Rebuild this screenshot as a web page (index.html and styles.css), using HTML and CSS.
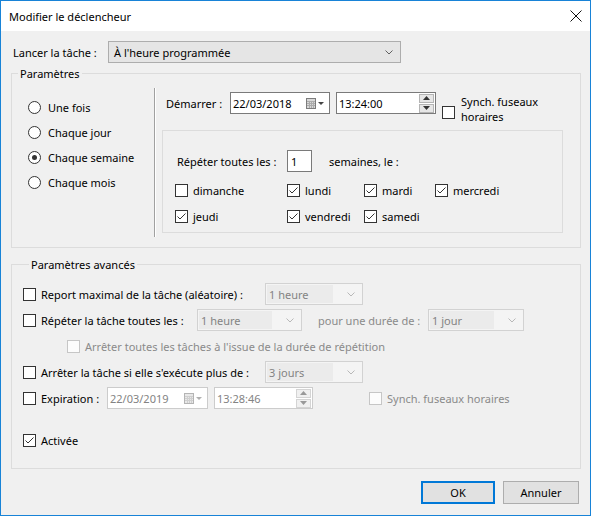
FILE: index.html
```html
<!DOCTYPE html>
<html lang="fr">
<head>
<meta charset="utf-8">
<title>Modifier le déclencheur</title>
<link rel="stylesheet" href="styles.css">
</head>
<body>
<div class="window">
  <div class="titlebar">
    <span class="title">Modifier le déclencheur</span>
    <svg class="close" width="12" height="12" viewBox="0 0 12 12"><path d="M0.5 0.5L11.5 11.5M11.5 0.5L0.5 11.5" stroke="#111" stroke-width="1" fill="none"/></svg>
  </div>
  <div class="content">
    <div class="launch">
      <span class="launch-label">Lancer la tâche :</span>
      <div class="combo combo-main">
        <span class="combo-value">À l'heure programmée</span>
        <svg class="chev" width="8" height="5" viewBox="0 0 8 5"><path d="M0.5 0.5L4 4L7.5 0.5" stroke="#606060" fill="none"/></svg>
      </div>
    </div>

    <fieldset class="group group-params">
      <legend>Paramètres</legend>
      <div class="params-body">
        <div class="radios">
          <div class="radio-row"><span class="radio"></span><span>Une fois</span></div>
          <div class="radio-row"><span class="radio"></span><span>Chaque jour</span></div>
          <div class="radio-row"><span class="radio radio-on"></span><span>Chaque semaine</span></div>
          <div class="radio-row"><span class="radio"></span><span>Chaque mois</span></div>
        </div>
        <div class="vsep"></div>
        <div class="schedule">
          <div class="start-row">
            <span class="start-label">Démarrer :</span>
            <div class="field date">
              <span class="field-text">22/03/2018</span>
              <svg class="cal" width="19" height="11" viewBox="0 0 19 11"><rect x="0.5" y="0.5" width="9" height="10" fill="#d8d8d8" stroke="#7c7c7c"/><path d="M1 3.5H9M1 5.5H9M1 7.5H9M3.5 3V10M5.5 3V10M7.5 3V10" stroke="#ababab" fill="none"/><path d="M12 4H18L15 7Z" fill="#444"/></svg>
            </div>
            <div class="field time">
              <span class="field-text">13:24:00</span>
              <div class="spin">
                <span class="spin-btn"><svg width="7" height="4" viewBox="0 0 7 4"><path d="M0 4H7L3.5 0Z" fill="#333"/></svg></span>
                <span class="spin-btn"><svg width="7" height="4" viewBox="0 0 7 4"><path d="M0 0H7L3.5 4Z" fill="#333"/></svg></span>
              </div>
            </div>
            <div class="synch">
              <span class="cb synch-cb"></span>
              <span class="synch-text">Synch. fuseaux<br>horaires</span>
            </div>
          </div>
          <div class="subframe">
            <div class="repeat-row">
              <span class="repeat-label">Répéter toutes les :</span>
              <div class="field num"><span class="field-text">1</span></div>
              <span class="weeks">semaines, le :</span>
            </div>
            <div class="days">
              <div class="day"><span class="cb"></span><span>dimanche</span></div>
              <div class="day"><span class="cb"><svg width="11" height="11" viewBox="0 0 11 11"><path d="M1.5 5.5L4 8L9.5 2.5" stroke="#333" fill="none"/></svg></span><span>lundi</span></div>
              <div class="day"><span class="cb"><svg width="11" height="11" viewBox="0 0 11 11"><path d="M1.5 5.5L4 8L9.5 2.5" stroke="#333" fill="none"/></svg></span><span>mardi</span></div>
              <div class="day"><span class="cb"><svg width="11" height="11" viewBox="0 0 11 11"><path d="M1.5 5.5L4 8L9.5 2.5" stroke="#333" fill="none"/></svg></span><span>mercredi</span></div>
              <div class="day"><span class="cb"><svg width="11" height="11" viewBox="0 0 11 11"><path d="M1.5 5.5L4 8L9.5 2.5" stroke="#333" fill="none"/></svg></span><span>jeudi</span></div>
              <div class="day"><span class="cb"><svg width="11" height="11" viewBox="0 0 11 11"><path d="M1.5 5.5L4 8L9.5 2.5" stroke="#333" fill="none"/></svg></span><span>vendredi</span></div>
              <div class="day"><span class="cb"><svg width="11" height="11" viewBox="0 0 11 11"><path d="M1.5 5.5L4 8L9.5 2.5" stroke="#333" fill="none"/></svg></span><span>samedi</span></div>
            </div>
          </div>
        </div>
      </div>
    </fieldset>

    <fieldset class="group group-adv">
      <legend>Paramètres avancés</legend>
      <div class="arow">
        <span class="cb"></span>
        <span class="alabel w-long">Report maximal de la tâche (aléatoire) :</span>
        <div class="combo combo-off w98"><span class="combo-value">1 heure</span><svg class="chev" width="8" height="5" viewBox="0 0 8 5"><path d="M0.5 0.5L4 4L7.5 0.5" stroke="#b8b8b8" fill="none"/></svg></div>
      </div>
      <div class="arow">
        <span class="cb"></span>
        <span class="alabel w-rep">Répéter la tâche toutes les :</span>
        <div class="combo combo-off w105"><span class="combo-value">1 heure</span><svg class="chev" width="8" height="5" viewBox="0 0 8 5"><path d="M0.5 0.5L4 4L7.5 0.5" stroke="#b8b8b8" fill="none"/></svg></div>
        <span class="duration off">pour une durée de :</span>
        <div class="combo combo-off w96"><span class="combo-value">1 jour</span><svg class="chev" width="8" height="5" viewBox="0 0 8 5"><path d="M0.5 0.5L4 4L7.5 0.5" stroke="#b8b8b8" fill="none"/></svg></div>
      </div>
      <div class="arow indent">
        <span class="cb cb-off"></span>
        <span class="alabel off">Arrêter toutes les tâches à l'issue de la durée de répétition</span>
      </div>
      <div class="arow">
        <span class="cb"></span>
        <span class="alabel w-long">Arrêter la tâche si elle s'exécute plus de :</span>
        <div class="combo combo-off w98"><span class="combo-value">3 jours</span><svg class="chev" width="8" height="5" viewBox="0 0 8 5"><path d="M0.5 0.5L4 4L7.5 0.5" stroke="#b8b8b8" fill="none"/></svg></div>
      </div>
      <div class="arow">
        <span class="cb"></span>
        <span class="alabel w-exp">Expiration :</span>
        <div class="field field-off date-off">
          <span class="field-text">22/03/2019</span>
          <svg class="cal" width="19" height="11" viewBox="0 0 19 11"><rect x="0.5" y="0.5" width="9" height="10" fill="#e8e8e8" stroke="#b4b4b4"/><path d="M1 3.5H9M1 5.5H9M1 7.5H9M3.5 3V10M5.5 3V10M7.5 3V10" stroke="#cfcfcf" fill="none"/><path d="M12 4H18L15 7Z" fill="#b0b0b0"/></svg>
        </div>
        <div class="field field-off time-off">
          <span class="field-text">13:28:46</span>
          <div class="spin spin-off">
            <span class="spin-btn"><svg width="7" height="4" viewBox="0 0 7 4"><path d="M0 4H7L3.5 0Z" fill="#999"/></svg></span>
            <span class="spin-btn"><svg width="7" height="4" viewBox="0 0 7 4"><path d="M0 0H7L3.5 4Z" fill="#999"/></svg></span>
          </div>
        </div>
        <span class="cb cb-off exp-synch"></span>
        <span class="alabel off">Synch. fuseaux horaires</span>
      </div>
      <div class="arow activee">
        <span class="cb"><svg width="11" height="11" viewBox="0 0 11 11"><path d="M1.5 5.5L4 8L9.5 2.5" stroke="#333" fill="none"/></svg></span>
        <span class="alabel">Activée</span>
      </div>
    </fieldset>

    <div class="buttons">
      <div class="btn btn-default">OK</div>
      <div class="btn btn-cancel">Annuler</div>
    </div>
  </div>
</div>
</body>
</html>
```

FILE: styles.css
```css
html, body {
  margin: 0;
  padding: 0;
}

body {
  width: 591px;
  height: 516px;
  overflow: hidden;
  background: #f0f0f0;
  font-family: "Noto Sans", sans-serif;
  font-size: 11px;
  line-height: 15px;
  color: #000;
}

.window {
  box-sizing: border-box;
  width: 591px;
  height: 516px;
  border: 1px solid #1883d7;
  background: #f0f0f0;
  display: flex;
  flex-direction: column;
}

.titlebar {
  flex: none;
  height: 30px;
  background: #fff;
  display: flex;
  align-items: center;
  justify-content: space-between;
  padding: 0 8px 0 8px;
}

.title {
  font-size: 11px;
}

.close {
  display: block;
}

.content {
  padding: 10px 9px 0 10px;
}

/* launch row */
.launch {
  display: flex;
  align-items: center;
  height: 22px;
}

.launch-label {
  width: 95px;
  padding-left: 2px;
  white-space: nowrap;
}

.combo {
  box-sizing: border-box;
  height: 22px;
  display: flex;
  align-items: center;
  justify-content: space-between;
  padding: 0 7px 0 5px;
  white-space: nowrap;
}

.combo-main {
  width: 293px;
  background: #e5e5e5;
  border: 1px solid #adadad;
}

.chev {
  display: block;
}

.combo-off {
  background: #f4f4f4;
  border: 1px solid #d2d2d2;
  color: #838383;
  padding-left: 0;
}

.combo-off .combo-value {
  background: #ebebeb;
  align-self: stretch;
  display: flex;
  align-items: center;
  margin: 1px 0 1px 1px;
  padding: 0 4px 0 2px;
  flex: 1;
  margin-right: 14px;
}

.w98 { width: 98px; }
.w105 { width: 105px; }
.w96 { width: 96px; }

/* group boxes */
.group {
  box-sizing: border-box;
  width: 570px;
  margin: 0;
  padding: 0;
  border: 1px solid #dcdcdc;
  min-width: 0;
}

.group legend {
  padding: 0 2px;
  margin-left: 6px;
  line-height: 17px;
}

.group-params {
  margin-top: 2px;
}

.params-body {
  display: flex;
  height: 165px;
}

.radios {
  box-sizing: border-box;
  width: 142px;
  padding: 13px 0 0 16px;
}

.radio-row {
  display: flex;
  align-items: center;
  gap: 7px;
  height: 25px;
}

.radio {
  box-sizing: border-box;
  width: 13px;
  height: 13px;
  border: 1px solid #333;
  border-radius: 50%;
  background: #fff;
  display: flex;
  align-items: center;
  justify-content: center;
}

.radio-on::after {
  content: "";
  width: 5px;
  height: 5px;
  border-radius: 50%;
  background: #333;
}

.vsep {
  margin-top: 6px;
  height: 149px;
  width: 0;
  border-left: 1px solid #a0a0a0;
  border-right: 1px solid #fff;
}

.schedule {
  flex: 1;
}

.start-row {
  display: flex;
  align-items: center;
  height: 22px;
  margin-top: 10px;
  padding-left: 10px;
}

.start-label {
  width: 64px;
  white-space: nowrap;
}

.field {
  box-sizing: border-box;
  height: 22px;
  background: #fff;
  border: 1px solid #7a7a7a;
  display: flex;
  align-items: center;
  justify-content: space-between;
  padding-left: 2px;
  white-space: nowrap;
}

.date {
  width: 100px;
  padding-right: 4px;
}

.time {
  width: 100px;
  margin-left: 6px;
  padding-right: 1px;
}

.cal {
  display: block;
}

.spin {
  display: flex;
  flex-direction: column;
  gap: 1px;
}

.spin-btn {
  box-sizing: border-box;
  width: 15px;
  height: 9px;
  background: #e6e6e6;
  border: 1px solid #b4b4b4;
  display: flex;
  align-items: center;
  justify-content: center;
}

.spin-btn svg {
  display: block;
}

.synch {
  align-self: flex-start;
  margin-top: 2px;
  margin-left: 6px;
  display: flex;
  align-items: flex-start;
  gap: 6px;
}

.synch-cb {
  margin-top: 12px;
}

.synch-text {
  white-space: nowrap;
}

.cb {
  flex: none;
  box-sizing: border-box;
  width: 13px;
  height: 13px;
  border: 1px solid #333;
  background: #fff;
  display: flex;
  align-items: center;
  justify-content: center;
}

.cb svg {
  display: block;
}

.cb-off {
  border-color: #c6c6c6;
  background: #fcfcfc;
}

.subframe {
  box-sizing: border-box;
  width: 401px;
  margin: 16px 0 0 6px;
  border: 1px solid #dcdcdc;
  padding: 19px 0 3px 14px;
}

.repeat-row {
  display: flex;
  align-items: center;
  height: 22px;
}

.repeat-label {
  width: 110px;
  white-space: nowrap;
}

.num {
  width: 25px;
  padding-left: 3px;
}

.weeks {
  margin-left: 17px;
  white-space: nowrap;
}

.days {
  display: grid;
  grid-template-columns: 112px 77px 71px auto;
  grid-auto-rows: 26px;
  margin: 5px 0 0 -2px;
}

.day {
  display: flex;
  align-items: center;
  gap: 5px;
  white-space: nowrap;
}

/* advanced */
.group-adv {
  margin-top: 8px;
  padding: 8px 0 15px 11px;
}

.arow {
  display: flex;
  align-items: center;
  height: 26px;
  white-space: nowrap;
}

.arow .alabel {
  margin-left: 5px;
}

.w-long { width: 224px; }
.w-rep { width: 156px; }
.w-exp { width: 66px; }

.off {
  color: #8a8a8a;
}

.duration {
  margin-left: 16px;
  width: 110px;
}

.indent {
  padding-left: 44px;
}

.field-off {
  border-color: #cccccc;
  color: #838383;
}

.date-off {
  width: 101px;
  padding-right: 4px;
}

.time-off {
  width: 99px;
  margin-left: 6px;
  padding-right: 1px;
}

.spin-off .spin-btn {
  background: #f0f0f0;
  border-color: #d4d4d4;
}

.exp-synch {
  margin-left: 56px;
}

.activee {
  margin-top: 16px;
}

/* buttons */
.buttons {
  display: flex;
  justify-content: flex-end;
  gap: 8px;
  margin-top: 12px;
  padding-right: 2px;
}

.btn {
  box-sizing: border-box;
  height: 23px;
  background: #e1e1e1;
  border: 1px solid #adadad;
  display: flex;
  align-items: center;
  justify-content: center;
}

.btn-default {
  width: 74px;
  border: 2px solid #0078d7;
}

.btn-cancel {
  width: 76px;
}
```
